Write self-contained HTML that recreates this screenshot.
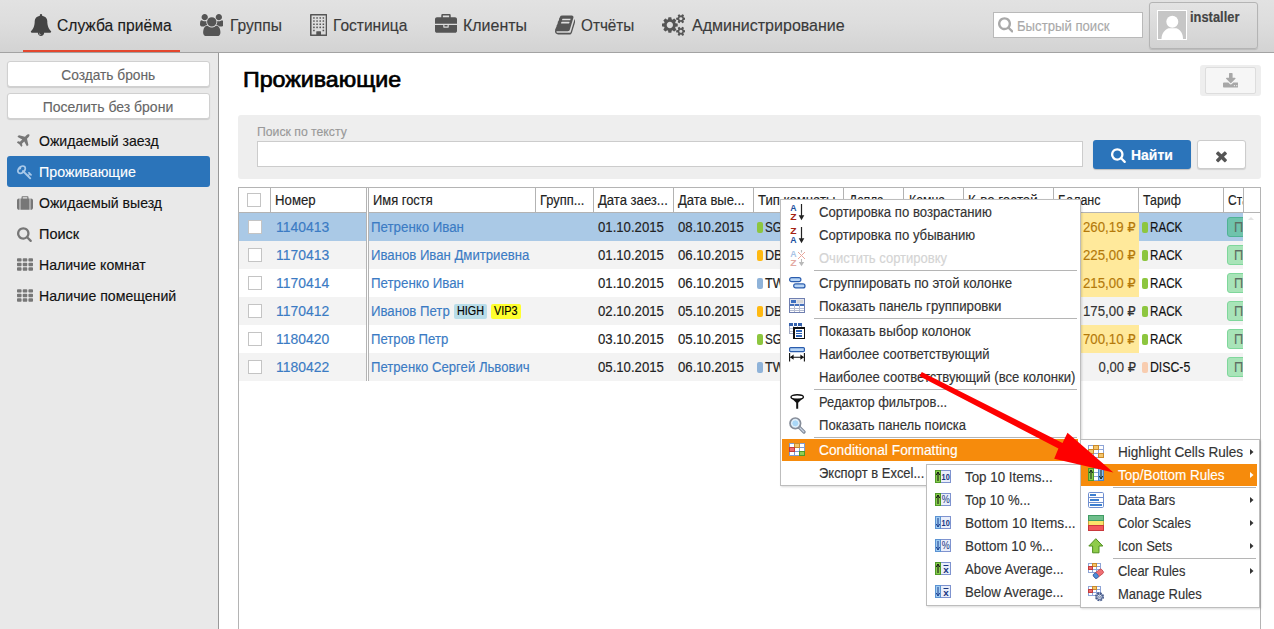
<!DOCTYPE html>
<html lang="ru"><head><meta charset="utf-8"><title>Проживающие</title>
<style>
*{box-sizing:border-box;margin:0;padding:0}
html,body{width:1274px;height:629px;overflow:hidden;background:#fff}
body{position:relative;font-family:"Liberation Sans", "DejaVu Sans", sans-serif;font-size:14px}
div,span.t,svg.i,svg.a{position:absolute}
nav,aside,main,section{position:absolute;left:0;top:0;width:0;height:0}
span.t{white-space:pre;line-height:20px;display:block;-webkit-text-stroke:0.15px}
.nav{background:linear-gradient(#e2e2e2,#dddddd 45%,#d3d3d3);border-bottom:1px solid #a3a3a3}
.side{background:#e9e9e9;border-right:1px solid #999}
.btn{background:#fff;border:1px solid #d0d0d0;border-radius:3px;box-shadow:0 1px 1px rgba(0,0,0,.12)}
.menu{background:#fff;border:1px solid #bdbdbd;box-shadow:1px 1px 2px rgba(0,0,0,.15)}
.sep{background:#b5b5b5;height:1px}
.hl{background:#f68b0c}
.cb{background:#fff;border:1px solid #c4c4c4}
.hc{border-right:1px solid #b3b3b3;border-bottom:1px solid #b3b3b3;background:#fff}
.dot{border-radius:2px}
.st{border:1px solid #7fd79b;background:#a8e4b8;border-radius:3px}

</style></head>
<body>
<nav>
<div class="nav" style="left:0px;top:0px;width:1274px;height:53px;"></div>
<div style="left:23px;top:50px;width:157px;height:2px;background:#e4472e"></div>
<svg class="i" style="left:29.8px;top:14px;" width="22.00" height="22" viewBox="0 -1536 1792 1792"><path fill="#444" transform="scale(1,-1)" d="M896 -144Q837 -144 794.5 -101.5Q752 -59 752 0Q752 16 736.0 16.0Q720 16 720 0Q720 -73 771.5 -124.5Q823 -176 896 -176Q912 -176 912.0 -160.0Q912 -144 896 -144ZM1728 128Q1728 76 1690.0 38.0Q1652 0 1600 0H1152Q1152 -106 1077.0 -181.0Q1002 -256 896.0 -256.0Q790 -256 715.0 -181.0Q640 -106 640 0H192Q140 0 102.0 38.0Q64 76 64 128Q114 170 155.0 216.0Q196 262 240.0 335.5Q284 409 314.5 494.0Q345 579 364.5 700.0Q384 821 384 960Q384 1112 501.0 1242.5Q618 1373 808 1401Q800 1420 800 1440Q800 1480 828.0 1508.0Q856 1536 896.0 1536.0Q936 1536 964.0 1508.0Q992 1480 992 1440Q992 1420 984 1401Q1174 1373 1291.0 1242.5Q1408 1112 1408 960Q1408 821 1427.5 700.0Q1447 579 1477.5 494.0Q1508 409 1552.0 335.5Q1596 262 1637.0 216.0Q1678 170 1728 128Z"/></svg>
<span class="t" style="left:57.30px;top:16.00px;font-size:17px;color:#1b1b1b;transform:scaleX(0.9186);transform-origin:0 0;">Служба приёма</span>
<svg class="i" style="left:199.7px;top:14px;" width="23.57" height="22" viewBox="0 -1536 1920 1792"><path fill="#555" transform="scale(1,-1)" d="M593 640Q431 635 328 512H194Q112 512 56.0 552.5Q0 593 0 671Q0 1024 124 1024Q130 1024 167.5 1003.0Q205 982 265.0 960.5Q325 939 384 939Q451 939 517 962Q512 925 512 896Q512 757 593 640ZM1664 3Q1664 -117 1591.0 -186.5Q1518 -256 1397 -256H523Q402 -256 329.0 -186.5Q256 -117 256 3Q256 56 259.5 106.5Q263 157 273.5 215.5Q284 274 300.0 324.0Q316 374 343.0 421.5Q370 469 405.0 502.5Q440 536 490.5 556.0Q541 576 602 576Q612 576 645.0 554.5Q678 533 718.0 506.5Q758 480 825.0 458.5Q892 437 960.0 437.0Q1028 437 1095.0 458.5Q1162 480 1202.0 506.5Q1242 533 1275.0 554.5Q1308 576 1318 576Q1379 576 1429.5 556.0Q1480 536 1515.0 502.5Q1550 469 1577.0 421.5Q1604 374 1620.0 324.0Q1636 274 1646.5 215.5Q1657 157 1660.5 106.5Q1664 56 1664 3ZM565.0 1461.0Q640 1386 640.0 1280.0Q640 1174 565.0 1099.0Q490 1024 384.0 1024.0Q278 1024 203.0 1099.0Q128 1174 128.0 1280.0Q128 1386 203.0 1461.0Q278 1536 384.0 1536.0Q490 1536 565.0 1461.0ZM1231.5 1167.5Q1344 1055 1344.0 896.0Q1344 737 1231.5 624.5Q1119 512 960.0 512.0Q801 512 688.5 624.5Q576 737 576.0 896.0Q576 1055 688.5 1167.5Q801 1280 960.0 1280.0Q1119 1280 1231.5 1167.5ZM1920 671Q1920 593 1864.0 552.5Q1808 512 1726 512H1592Q1489 635 1327 640Q1408 757 1408 896Q1408 925 1403 962Q1469 939 1536 939Q1595 939 1655.0 960.5Q1715 982 1752.5 1003.0Q1790 1024 1796 1024Q1920 1024 1920 671ZM1717.0 1461.0Q1792 1386 1792.0 1280.0Q1792 1174 1717.0 1099.0Q1642 1024 1536.0 1024.0Q1430 1024 1355.0 1099.0Q1280 1174 1280.0 1280.0Q1280 1386 1355.0 1461.0Q1430 1536 1536.0 1536.0Q1642 1536 1717.0 1461.0Z"/></svg>
<span class="t" style="left:230.40px;top:16.00px;font-size:17px;color:#3a3a3a;transform:scaleX(0.9175);transform-origin:0 0;">Группы</span>
<svg class="i" style="left:310px;top:14px;" width="17.29" height="22" viewBox="0 -1536 1408 1792"><path fill="#555" transform="scale(1,-1)" d="M384 224V160Q384 147 374.5 137.5Q365 128 352 128H288Q275 128 265.5 137.5Q256 147 256 160V224Q256 237 265.5 246.5Q275 256 288 256H352Q365 256 374.5 246.5Q384 237 384 224ZM384 480V416Q384 403 374.5 393.5Q365 384 352 384H288Q275 384 265.5 393.5Q256 403 256 416V480Q256 493 265.5 502.5Q275 512 288 512H352Q365 512 374.5 502.5Q384 493 384 480ZM640 480V416Q640 403 630.5 393.5Q621 384 608 384H544Q531 384 521.5 393.5Q512 403 512 416V480Q512 493 521.5 502.5Q531 512 544 512H608Q621 512 630.5 502.5Q640 493 640 480ZM384 736V672Q384 659 374.5 649.5Q365 640 352 640H288Q275 640 265.5 649.5Q256 659 256 672V736Q256 749 265.5 758.5Q275 768 288 768H352Q365 768 374.5 758.5Q384 749 384 736ZM1152 224V160Q1152 147 1142.5 137.5Q1133 128 1120 128H1056Q1043 128 1033.5 137.5Q1024 147 1024 160V224Q1024 237 1033.5 246.5Q1043 256 1056 256H1120Q1133 256 1142.5 246.5Q1152 237 1152 224ZM896 480V416Q896 403 886.5 393.5Q877 384 864 384H800Q787 384 777.5 393.5Q768 403 768 416V480Q768 493 777.5 502.5Q787 512 800 512H864Q877 512 886.5 502.5Q896 493 896 480ZM640 736V672Q640 659 630.5 649.5Q621 640 608 640H544Q531 640 521.5 649.5Q512 659 512 672V736Q512 749 521.5 758.5Q531 768 544 768H608Q621 768 630.5 758.5Q640 749 640 736ZM384 992V928Q384 915 374.5 905.5Q365 896 352 896H288Q275 896 265.5 905.5Q256 915 256 928V992Q256 1005 265.5 1014.5Q275 1024 288 1024H352Q365 1024 374.5 1014.5Q384 1005 384 992ZM1152 480V416Q1152 403 1142.5 393.5Q1133 384 1120 384H1056Q1043 384 1033.5 393.5Q1024 403 1024 416V480Q1024 493 1033.5 502.5Q1043 512 1056 512H1120Q1133 512 1142.5 502.5Q1152 493 1152 480ZM896 736V672Q896 659 886.5 649.5Q877 640 864 640H800Q787 640 777.5 649.5Q768 659 768 672V736Q768 749 777.5 758.5Q787 768 800 768H864Q877 768 886.5 758.5Q896 749 896 736ZM640 992V928Q640 915 630.5 905.5Q621 896 608 896H544Q531 896 521.5 905.5Q512 915 512 928V992Q512 1005 521.5 1014.5Q531 1024 544 1024H608Q621 1024 630.5 1014.5Q640 1005 640 992ZM384 1248V1184Q384 1171 374.5 1161.5Q365 1152 352 1152H288Q275 1152 265.5 1161.5Q256 1171 256 1184V1248Q256 1261 265.5 1270.5Q275 1280 288 1280H352Q365 1280 374.5 1270.5Q384 1261 384 1248ZM1152 736V672Q1152 659 1142.5 649.5Q1133 640 1120 640H1056Q1043 640 1033.5 649.5Q1024 659 1024 672V736Q1024 749 1033.5 758.5Q1043 768 1056 768H1120Q1133 768 1142.5 758.5Q1152 749 1152 736ZM896 992V928Q896 915 886.5 905.5Q877 896 864 896H800Q787 896 777.5 905.5Q768 915 768 928V992Q768 1005 777.5 1014.5Q787 1024 800 1024H864Q877 1024 886.5 1014.5Q896 1005 896 992ZM640 1248V1184Q640 1171 630.5 1161.5Q621 1152 608 1152H544Q531 1152 521.5 1161.5Q512 1171 512 1184V1248Q512 1261 521.5 1270.5Q531 1280 544 1280H608Q621 1280 630.5 1270.5Q640 1261 640 1248ZM1152 992V928Q1152 915 1142.5 905.5Q1133 896 1120 896H1056Q1043 896 1033.5 905.5Q1024 915 1024 928V992Q1024 1005 1033.5 1014.5Q1043 1024 1056 1024H1120Q1133 1024 1142.5 1014.5Q1152 1005 1152 992ZM896 1248V1184Q896 1171 886.5 1161.5Q877 1152 864 1152H800Q787 1152 777.5 1161.5Q768 1171 768 1184V1248Q768 1261 777.5 1270.5Q787 1280 800 1280H864Q877 1280 886.5 1270.5Q896 1261 896 1248ZM1152 1248V1184Q1152 1171 1142.5 1161.5Q1133 1152 1120 1152H1056Q1043 1152 1033.5 1161.5Q1024 1171 1024 1184V1248Q1024 1261 1033.5 1270.5Q1043 1280 1056 1280H1120Q1133 1280 1142.5 1270.5Q1152 1261 1152 1248ZM896 -128H1280V1408H128V-128H512V96Q512 109 521.5 118.5Q531 128 544 128H864Q877 128 886.5 118.5Q896 109 896 96ZM1408 1472V-192Q1408 -218 1389.0 -237.0Q1370 -256 1344 -256H64Q38 -256 19.0 -237.0Q0 -218 0 -192V1472Q0 1498 19.0 1517.0Q38 1536 64 1536H1344Q1370 1536 1389.0 1517.0Q1408 1498 1408 1472Z"/></svg>
<span class="t" style="left:333.30px;top:16.00px;font-size:17px;color:#3a3a3a;transform:scaleX(0.9144);transform-origin:0 0;">Гостиница</span>
<svg class="i" style="left:435px;top:14px;" width="22.00" height="22" viewBox="0 -1536 1792 1792"><path fill="#555" transform="scale(1,-1)" d="M640 1280H1152V1408H640ZM1792 640V160Q1792 94 1745.0 47.0Q1698 0 1632 0H160Q94 0 47.0 47.0Q0 94 0 160V640H672V480Q672 454 691.0 435.0Q710 416 736 416H1056Q1082 416 1101.0 435.0Q1120 454 1120 480V640ZM1024 640V512H768V640ZM1792 1120V736H0V1120Q0 1186 47.0 1233.0Q94 1280 160 1280H512V1440Q512 1480 540.0 1508.0Q568 1536 608 1536H1184Q1224 1536 1252.0 1508.0Q1280 1480 1280 1440V1280H1632Q1698 1280 1745.0 1233.0Q1792 1186 1792 1120Z"/></svg>
<span class="t" style="left:463.40px;top:16.00px;font-size:17px;color:#3a3a3a;transform:scaleX(0.9390);transform-origin:0 0;">Клиенты</span>
<svg class="i" style="left:555px;top:14px;" width="20.43" height="22" viewBox="0 -1536 1664 1792"><path fill="#555" transform="scale(1,-1)" d="M1639 1058Q1679 1001 1657 929L1382 23Q1363 -41 1305.5 -84.5Q1248 -128 1183 -128H260Q183 -128 111.5 -74.5Q40 -21 12 57Q-12 124 10 184Q10 188 13.0 211.0Q16 234 17 248Q18 256 14.0 269.5Q10 283 11 289Q13 300 19.0 310.0Q25 320 35.5 333.5Q46 347 52 357Q75 395 97.0 448.5Q119 502 127 540Q130 550 127.5 570.0Q125 590 127 598Q130 609 144.0 626.0Q158 643 161 649Q182 685 203.0 741.0Q224 797 228 831Q229 840 225.5 863.0Q222 886 226 891Q230 904 248.0 921.5Q266 939 270 944Q289 970 312.5 1028.5Q336 1087 340 1125Q341 1133 337.0 1150.5Q333 1168 335 1177Q337 1185 344.0 1195.0Q351 1205 362.0 1218.0Q373 1231 379 1239Q387 1251 395.5 1269.5Q404 1288 410.5 1304.5Q417 1321 426.5 1340.5Q436 1360 446.0 1372.5Q456 1385 472.5 1396.0Q489 1407 508.5 1407.5Q528 1408 556 1402L555 1399Q593 1408 606 1408H1367Q1441 1408 1481.0 1352.0Q1521 1296 1499 1222L1225 316Q1189 197 1153.5 162.5Q1118 128 1025 128H156Q129 128 118 113Q107 97 117 70Q141 0 261 0H1184Q1213 0 1240.0 15.5Q1267 31 1275 57L1575 1044Q1582 1066 1580 1101Q1618 1086 1639 1058ZM575 1056Q571 1043 577.0 1033.5Q583 1024 597 1024H1205Q1218 1024 1230.5 1033.5Q1243 1043 1247 1056L1268 1120Q1272 1133 1266.0 1142.5Q1260 1152 1246 1152H638Q625 1152 612.5 1142.5Q600 1133 596 1120ZM492 800Q488 787 494.0 777.5Q500 768 514 768H1122Q1135 768 1147.5 777.5Q1160 787 1164 800L1185 864Q1189 877 1183.0 886.5Q1177 896 1163 896H555Q542 896 529.5 886.5Q517 877 513 864Z"/></svg>
<span class="t" style="left:581.30px;top:16.00px;font-size:17px;color:#3a3a3a;transform:scaleX(0.8994);transform-origin:0 0;">Отчёты</span>
<svg class="i" style="left:661.7px;top:14px;" width="23.57" height="22" viewBox="0 -1536 1920 1792"><path fill="#555" transform="scale(1,-1)" d="M821.0 459.0Q896 534 896.0 640.0Q896 746 821.0 821.0Q746 896 640.0 896.0Q534 896 459.0 821.0Q384 746 384.0 640.0Q384 534 459.0 459.0Q534 384 640.0 384.0Q746 384 821.0 459.0ZM1664 128Q1664 180 1626.0 218.0Q1588 256 1536.0 256.0Q1484 256 1446.0 218.0Q1408 180 1408 128Q1408 75 1445.5 37.5Q1483 0 1536.0 0.0Q1589 0 1626.5 37.5Q1664 75 1664 128ZM1664 1152Q1664 1204 1626.0 1242.0Q1588 1280 1536.0 1280.0Q1484 1280 1446.0 1242.0Q1408 1204 1408 1152Q1408 1099 1445.5 1061.5Q1483 1024 1536.0 1024.0Q1589 1024 1626.5 1061.5Q1664 1099 1664 1152ZM1280 731V546Q1280 536 1273.0 526.5Q1266 517 1257 516L1102 492Q1091 457 1070 416Q1104 368 1160 301Q1167 290 1167 281Q1167 269 1160 262Q1137 232 1077.5 172.5Q1018 113 999 113Q988 113 978 120L863 210Q826 191 786 179Q775 71 763 24Q756 0 733 0H547Q536 0 527.0 7.5Q518 15 517 25L494 178Q460 188 419 209L301 120Q294 113 281 113Q270 113 260 121Q116 254 116 281Q116 290 123 300Q133 314 164.0 353.0Q195 392 211 414Q188 458 176 496L24 520Q14 521 7.0 529.5Q0 538 0 549V734Q0 744 7.0 753.5Q14 763 23 764L178 788Q189 823 210 864Q176 912 120 979Q113 990 113 999Q113 1011 120 1019Q142 1049 202.0 1108.0Q262 1167 281 1167Q292 1167 302 1160L417 1070Q451 1088 494 1102Q505 1210 517 1256Q524 1280 547 1280H733Q744 1280 753.0 1272.5Q762 1265 763 1255L786 1102Q820 1092 861 1071L979 1160Q987 1167 999 1167Q1010 1167 1020 1159Q1164 1026 1164 999Q1164 991 1157 980Q1145 964 1115.0 926.0Q1085 888 1070 866Q1093 818 1104 784L1256 761Q1266 759 1273.0 750.5Q1280 742 1280 731ZM1920 198V58Q1920 42 1771 27Q1759 0 1741 -25Q1792 -138 1792 -163Q1792 -167 1788 -170Q1666 -241 1664 -241Q1656 -241 1618.0 -194.0Q1580 -147 1566 -126Q1546 -128 1536.0 -128.0Q1526 -128 1506 -126Q1492 -147 1454.0 -194.0Q1416 -241 1408 -241Q1406 -241 1284 -170Q1280 -167 1280 -163Q1280 -138 1331 -25Q1313 0 1301 27Q1152 42 1152 58V198Q1152 214 1301 229Q1314 258 1331 281Q1280 394 1280 419Q1280 423 1284 426Q1288 428 1319.0 446.0Q1350 464 1378.0 480.0Q1406 496 1408 496Q1416 496 1454.0 449.5Q1492 403 1506 382Q1526 384 1536.0 384.0Q1546 384 1566 382Q1617 453 1658 494L1664 496Q1668 496 1788 426Q1792 423 1792 419Q1792 394 1741 281Q1758 258 1771 229Q1920 214 1920 198ZM1920 1222V1082Q1920 1066 1771 1051Q1759 1024 1741 999Q1792 886 1792 861Q1792 857 1788 854Q1666 783 1664 783Q1656 783 1618.0 830.0Q1580 877 1566 898Q1546 896 1536.0 896.0Q1526 896 1506 898Q1492 877 1454.0 830.0Q1416 783 1408 783Q1406 783 1284 854Q1280 857 1280 861Q1280 886 1331 999Q1313 1024 1301 1051Q1152 1066 1152 1082V1222Q1152 1238 1301 1253Q1314 1282 1331 1305Q1280 1418 1280 1443Q1280 1447 1284 1450Q1288 1452 1319.0 1470.0Q1350 1488 1378.0 1504.0Q1406 1520 1408 1520Q1416 1520 1454.0 1473.5Q1492 1427 1506 1406Q1526 1408 1536.0 1408.0Q1546 1408 1566 1406Q1617 1477 1658 1518L1664 1520Q1668 1520 1788 1450Q1792 1447 1792 1443Q1792 1418 1741 1305Q1758 1282 1771 1253Q1920 1238 1920 1222Z"/></svg>
<span class="t" style="left:692.00px;top:16.00px;font-size:17px;color:#3a3a3a;transform:scaleX(0.9421);transform-origin:0 0;">Администрирование</span>
<div style="left:993px;top:12px;width:150px;height:26px;background:#fff;border:1px solid #b9b9b9"></div>
<svg class="i" style="left:997.7px;top:16.2px;" width="15.41" height="16.6" viewBox="0 -1536 1664 1792"><path fill="#a9a9a9" transform="scale(1,-1)" d="M1020.5 387.5Q1152 519 1152.0 704.0Q1152 889 1020.5 1020.5Q889 1152 704.0 1152.0Q519 1152 387.5 1020.5Q256 889 256.0 704.0Q256 519 387.5 387.5Q519 256 704.0 256.0Q889 256 1020.5 387.5ZM1664 -128Q1664 -180 1626.0 -218.0Q1588 -256 1536 -256Q1482 -256 1446 -218L1103 124Q924 0 704 0Q561 0 430.5 55.5Q300 111 205.5 205.5Q111 300 55.5 430.5Q0 561 0.0 704.0Q0 847 55.5 977.5Q111 1108 205.5 1202.5Q300 1297 430.5 1352.5Q561 1408 704.0 1408.0Q847 1408 977.5 1352.5Q1108 1297 1202.5 1202.5Q1297 1108 1352.5 977.5Q1408 847 1408 704Q1408 484 1284 305L1627 -38Q1664 -75 1664 -128Z"/></svg>
<span class="t" style="left:1017.30px;top:15.90px;font-size:14px;color:#a9a9a9;transform:scaleX(0.9382);transform-origin:0 0;">Быстрый поиск</span>
<div style="left:1149px;top:2px;width:109px;height:47px;background:linear-gradient(#e3e3e3,#d2d2d2);border:1px solid #b4b4b4;border-radius:3px;box-shadow:0 1px 1px rgba(0,0,0,.12)"></div>
<svg class="i" style="left:1157px;top:10px" width="30" height="30" viewBox="0 0 30 30"><rect width="30" height="30" fill="#fff"/><rect x="1" y="1" width="28" height="28" fill="#c6c6c6"/><circle cx="15.3" cy="11.8" r="6" fill="#fff"/><path d="M4.5 29C4.5 24 7 20 11.500 18.200H19.500C24 20 26 24 26 29z" fill="#fff"/></svg>
<span class="t" style="left:1190.20px;top:7.30px;font-size:14px;color:#444;font-weight:700;transform:scaleX(0.9200);transform-origin:0 0;">installer</span>
</nav>
<aside>
<div class="side" style="left:0px;top:53px;width:219px;height:576px;"></div>
<div class="btn" style="left:7px;top:61px;width:203px;height:26px;"></div>
<span class="t" style="left:56.93px;top:65.00px;font-size:15px;color:#666;transform:scaleX(0.9159);transform-origin:50% 0;">Создать бронь</span>
<div class="btn" style="left:7px;top:93px;width:203px;height:26px;"></div>
<span class="t" style="left:38.36px;top:97.00px;font-size:15px;color:#666;transform:scaleX(0.9333);transform-origin:50% 0;">Поселить без брони</span>
<svg class="i" style="left:17px;top:133.2px;" width="12.57" height="16" viewBox="0 -1536 1408 1792"><path fill="#777" transform="scale(1,-1)" d="M1376 1376Q1420 1324 1388.0 1228.0Q1356 1132 1280 1056L1119 895L1279 199Q1284 180 1267 166L1139 70Q1132 64 1120 64Q1116 64 1113 65Q1098 68 1092 81L813 589L554 330L607 136Q612 119 599 105L503 9Q494 0 480 0H478Q463 2 454 13L265 265L13 454Q2 461 0 477Q-1 490 9 502L105 599Q114 608 128 608Q134 608 136 607L330 554L589 813L81 1092Q67 1100 64 1116Q62 1132 73 1143L201 1271Q215 1284 231 1279L896 1120L1056 1280Q1132 1356 1228.0 1388.0Q1324 1420 1376 1376Z"/></svg>
<span class="t" style="left:39.40px;top:131.30px;font-size:15px;color:#111;transform:scaleX(0.9372);transform-origin:0 0;">Ожидаемый заезд</span>
<div style="left:7px;top:156px;width:203px;height:31px;background:#2b74ba;border-radius:3px"></div>
<svg class="i" style="left:17px;top:164.2px;" width="16.00" height="16" viewBox="0 -1536 1792 1792"><path fill="#a9c9e9" transform="scale(1,-1)" d="M448 1024Q448 982 467 941Q426 960 384 960Q304 960 248.0 904.0Q192 848 192.0 768.0Q192 688 248.0 632.0Q304 576 384.0 576.0Q464 576 520.0 632.0Q576 688 576 768Q576 810 557 851Q598 832 640 832Q720 832 776.0 888.0Q832 944 832.0 1024.0Q832 1104 776.0 1160.0Q720 1216 640.0 1216.0Q560 1216 504.0 1160.0Q448 1104 448 1024ZM1683 320Q1683 303 1634.0 254.0Q1585 205 1568 205Q1559 205 1539.5 221.0Q1520 237 1503.0 254.0Q1486 271 1464.5 294.0Q1443 317 1440 320L1344 224L1564 4Q1592 -24 1592 -64Q1592 -106 1553.0 -145.0Q1514 -184 1472 -184Q1432 -184 1404 -156L733 515Q557 384 368 384Q205 384 102.5 486.5Q0 589 0 752Q0 912 95.0 1065.0Q190 1218 343.0 1313.0Q496 1408 656 1408Q819 1408 921.5 1305.5Q1024 1203 1024 1040Q1024 851 893 675L1248 320L1344 416Q1341 419 1318.0 440.5Q1295 462 1278.0 479.0Q1261 496 1245.0 515.5Q1229 535 1229 544Q1229 561 1278.0 610.0Q1327 659 1344 659Q1357 659 1367 649Q1373 643 1413.0 604.5Q1453 566 1495.0 525.0Q1537 484 1581.5 439.0Q1626 394 1654.5 361.0Q1683 328 1683 320Z"/></svg>
<span class="t" style="left:39.40px;top:162.30px;font-size:15px;color:#fff;transform:scaleX(0.9479);transform-origin:0 0;">Проживающие</span>
<svg class="i" style="left:17px;top:195.2px;" width="16.00" height="16" viewBox="0 -1536 1792 1792"><path fill="#777" transform="scale(1,-1)" d="M640 1152H1152V1280H640ZM288 1152V-128H224Q132 -128 66.0 -62.0Q0 4 0 96V928Q0 1020 66.0 1086.0Q132 1152 224 1152ZM1408 1152V-128H384V1152H512V1312Q512 1352 540.0 1380.0Q568 1408 608 1408H1184Q1224 1408 1252.0 1380.0Q1280 1352 1280 1312V1152ZM1792 928V96Q1792 4 1726.0 -62.0Q1660 -128 1568 -128H1504V1152H1568Q1660 1152 1726.0 1086.0Q1792 1020 1792 928Z"/></svg>
<span class="t" style="left:39.40px;top:193.30px;font-size:15px;color:#111;transform:scaleX(0.9375);transform-origin:0 0;">Ожидаемый выезд</span>
<svg class="i" style="left:17px;top:226.2px;" width="14.86" height="16" viewBox="0 -1536 1664 1792"><path fill="#777" transform="scale(1,-1)" d="M1020.5 387.5Q1152 519 1152.0 704.0Q1152 889 1020.5 1020.5Q889 1152 704.0 1152.0Q519 1152 387.5 1020.5Q256 889 256.0 704.0Q256 519 387.5 387.5Q519 256 704.0 256.0Q889 256 1020.5 387.5ZM1664 -128Q1664 -180 1626.0 -218.0Q1588 -256 1536 -256Q1482 -256 1446 -218L1103 124Q924 0 704 0Q561 0 430.5 55.5Q300 111 205.5 205.5Q111 300 55.5 430.5Q0 561 0.0 704.0Q0 847 55.5 977.5Q111 1108 205.5 1202.5Q300 1297 430.5 1352.5Q561 1408 704.0 1408.0Q847 1408 977.5 1352.5Q1108 1297 1202.5 1202.5Q1297 1108 1352.5 977.5Q1408 847 1408 704Q1408 484 1284 305L1627 -38Q1664 -75 1664 -128Z"/></svg>
<span class="t" style="left:39.40px;top:224.30px;font-size:15px;color:#111;transform:scaleX(0.9635);transform-origin:0 0;">Поиск</span>
<svg class="i" style="left:17px;top:257.2px;" width="16.00" height="16" viewBox="0 -1536 1792 1792"><path fill="#777" transform="scale(1,-1)" d="M512 288V96Q512 56 484.0 28.0Q456 0 416 0H96Q56 0 28.0 28.0Q0 56 0 96V288Q0 328 28.0 356.0Q56 384 96 384H416Q456 384 484.0 356.0Q512 328 512 288ZM512 800V608Q512 568 484.0 540.0Q456 512 416 512H96Q56 512 28.0 540.0Q0 568 0 608V800Q0 840 28.0 868.0Q56 896 96 896H416Q456 896 484.0 868.0Q512 840 512 800ZM1152 288V96Q1152 56 1124.0 28.0Q1096 0 1056 0H736Q696 0 668.0 28.0Q640 56 640 96V288Q640 328 668.0 356.0Q696 384 736 384H1056Q1096 384 1124.0 356.0Q1152 328 1152 288ZM512 1312V1120Q512 1080 484.0 1052.0Q456 1024 416 1024H96Q56 1024 28.0 1052.0Q0 1080 0 1120V1312Q0 1352 28.0 1380.0Q56 1408 96 1408H416Q456 1408 484.0 1380.0Q512 1352 512 1312ZM1152 800V608Q1152 568 1124.0 540.0Q1096 512 1056 512H736Q696 512 668.0 540.0Q640 568 640 608V800Q640 840 668.0 868.0Q696 896 736 896H1056Q1096 896 1124.0 868.0Q1152 840 1152 800ZM1792 288V96Q1792 56 1764.0 28.0Q1736 0 1696 0H1376Q1336 0 1308.0 28.0Q1280 56 1280 96V288Q1280 328 1308.0 356.0Q1336 384 1376 384H1696Q1736 384 1764.0 356.0Q1792 328 1792 288ZM1152 1312V1120Q1152 1080 1124.0 1052.0Q1096 1024 1056 1024H736Q696 1024 668.0 1052.0Q640 1080 640 1120V1312Q640 1352 668.0 1380.0Q696 1408 736 1408H1056Q1096 1408 1124.0 1380.0Q1152 1352 1152 1312ZM1792 800V608Q1792 568 1764.0 540.0Q1736 512 1696 512H1376Q1336 512 1308.0 540.0Q1280 568 1280 608V800Q1280 840 1308.0 868.0Q1336 896 1376 896H1696Q1736 896 1764.0 868.0Q1792 840 1792 800ZM1792 1312V1120Q1792 1080 1764.0 1052.0Q1736 1024 1696 1024H1376Q1336 1024 1308.0 1052.0Q1280 1080 1280 1120V1312Q1280 1352 1308.0 1380.0Q1336 1408 1376 1408H1696Q1736 1408 1764.0 1380.0Q1792 1352 1792 1312Z"/></svg>
<span class="t" style="left:39.40px;top:255.30px;font-size:15px;color:#111;transform:scaleX(0.9392);transform-origin:0 0;">Наличие комнат</span>
<svg class="i" style="left:17px;top:288.2px;" width="16.00" height="16" viewBox="0 -1536 1792 1792"><path fill="#777" transform="scale(1,-1)" d="M512 288V96Q512 56 484.0 28.0Q456 0 416 0H96Q56 0 28.0 28.0Q0 56 0 96V288Q0 328 28.0 356.0Q56 384 96 384H416Q456 384 484.0 356.0Q512 328 512 288ZM512 800V608Q512 568 484.0 540.0Q456 512 416 512H96Q56 512 28.0 540.0Q0 568 0 608V800Q0 840 28.0 868.0Q56 896 96 896H416Q456 896 484.0 868.0Q512 840 512 800ZM1152 288V96Q1152 56 1124.0 28.0Q1096 0 1056 0H736Q696 0 668.0 28.0Q640 56 640 96V288Q640 328 668.0 356.0Q696 384 736 384H1056Q1096 384 1124.0 356.0Q1152 328 1152 288ZM512 1312V1120Q512 1080 484.0 1052.0Q456 1024 416 1024H96Q56 1024 28.0 1052.0Q0 1080 0 1120V1312Q0 1352 28.0 1380.0Q56 1408 96 1408H416Q456 1408 484.0 1380.0Q512 1352 512 1312ZM1152 800V608Q1152 568 1124.0 540.0Q1096 512 1056 512H736Q696 512 668.0 540.0Q640 568 640 608V800Q640 840 668.0 868.0Q696 896 736 896H1056Q1096 896 1124.0 868.0Q1152 840 1152 800ZM1792 288V96Q1792 56 1764.0 28.0Q1736 0 1696 0H1376Q1336 0 1308.0 28.0Q1280 56 1280 96V288Q1280 328 1308.0 356.0Q1336 384 1376 384H1696Q1736 384 1764.0 356.0Q1792 328 1792 288ZM1152 1312V1120Q1152 1080 1124.0 1052.0Q1096 1024 1056 1024H736Q696 1024 668.0 1052.0Q640 1080 640 1120V1312Q640 1352 668.0 1380.0Q696 1408 736 1408H1056Q1096 1408 1124.0 1380.0Q1152 1352 1152 1312ZM1792 800V608Q1792 568 1764.0 540.0Q1736 512 1696 512H1376Q1336 512 1308.0 540.0Q1280 568 1280 608V800Q1280 840 1308.0 868.0Q1336 896 1376 896H1696Q1736 896 1764.0 868.0Q1792 840 1792 800ZM1792 1312V1120Q1792 1080 1764.0 1052.0Q1736 1024 1696 1024H1376Q1336 1024 1308.0 1052.0Q1280 1080 1280 1120V1312Q1280 1352 1308.0 1380.0Q1336 1408 1376 1408H1696Q1736 1408 1764.0 1380.0Q1792 1352 1792 1312Z"/></svg>
<span class="t" style="left:39.40px;top:286.30px;font-size:15px;color:#111;transform:scaleX(0.9417);transform-origin:0 0;">Наличие помещений</span>
</aside>
<main>
<span class="t" style="left:242.60px;top:70.20px;font-size:22.5px;color:#000;transform:scaleX(1.0323);transform-origin:0 0;-webkit-text-stroke:0.7px #000;">Проживающие</span>
<div style="left:1200px;top:65px;width:61px;height:31px;background:#eee;border-radius:3px"></div>
<div style="left:1205px;top:67px;width:51px;height:27px;background:#f6f6f6;border:1px solid #ddd;border-radius:2px"></div>
<svg class="i" style="left:1222.7px;top:72.8px;" width="15.60" height="16.8" viewBox="0 -1536 1664 1792"><path fill="#a8a8a8" transform="scale(1,-1)" d="M1261.0 147.0Q1280 166 1280.0 192.0Q1280 218 1261.0 237.0Q1242 256 1216.0 256.0Q1190 256 1171.0 237.0Q1152 218 1152.0 192.0Q1152 166 1171.0 147.0Q1190 128 1216.0 128.0Q1242 128 1261.0 147.0ZM1517.0 147.0Q1536 166 1536.0 192.0Q1536 218 1517.0 237.0Q1498 256 1472.0 256.0Q1446 256 1427.0 237.0Q1408 218 1408.0 192.0Q1408 166 1427.0 147.0Q1446 128 1472.0 128.0Q1498 128 1517.0 147.0ZM1664 416V96Q1664 56 1636.0 28.0Q1608 0 1568 0H96Q56 0 28.0 28.0Q0 56 0 96V416Q0 456 28.0 484.0Q56 512 96 512H561L696 376Q754 320 832.0 320.0Q910 320 968 376L1104 512H1568Q1608 512 1636.0 484.0Q1664 456 1664 416ZM1339 985Q1356 944 1325 915L877 467Q859 448 832.0 448.0Q805 448 787 467L339 915Q308 944 325 985Q342 1024 384 1024H640V1472Q640 1498 659.0 1517.0Q678 1536 704 1536H960Q986 1536 1005.0 1517.0Q1024 1498 1024 1472V1024H1280Q1322 1024 1339 985Z"/></svg>
<div style="left:238px;top:115px;width:1023px;height:64px;background:#eee;border-radius:3px"></div>
<span class="t" style="left:257.00px;top:122.00px;font-size:13px;color:#999;transform:scaleX(0.9404);transform-origin:0 0;">Поиск по тексту</span>
<div style="left:257px;top:141px;width:826px;height:26px;background:#fff;border:1px solid #ccc"></div>
<div style="left:1093px;top:140px;width:98px;height:29px;background:#2b74ba;border-radius:3px;box-shadow:0 1px 1px rgba(0,0,0,.2)"></div>
<svg class="i" style="left:1111px;top:147.2px;" width="14.86" height="16" viewBox="0 -1536 1664 1792"><path fill="#fff" transform="scale(1,-1)" d="M1020.5 387.5Q1152 519 1152.0 704.0Q1152 889 1020.5 1020.5Q889 1152 704.0 1152.0Q519 1152 387.5 1020.5Q256 889 256.0 704.0Q256 519 387.5 387.5Q519 256 704.0 256.0Q889 256 1020.5 387.5ZM1664 -128Q1664 -180 1626.0 -218.0Q1588 -256 1536 -256Q1482 -256 1446 -218L1103 124Q924 0 704 0Q561 0 430.5 55.5Q300 111 205.5 205.5Q111 300 55.5 430.5Q0 561 0.0 704.0Q0 847 55.5 977.5Q111 1108 205.5 1202.5Q300 1297 430.5 1352.5Q561 1408 704.0 1408.0Q847 1408 977.5 1352.5Q1108 1297 1202.5 1202.5Q1297 1108 1352.5 977.5Q1408 847 1408 704Q1408 484 1284 305L1627 -38Q1664 -75 1664 -128Z"/></svg>
<span class="t" style="left:1130.60px;top:145.00px;font-size:15px;color:#fff;font-weight:700;transform:scaleX(0.9295);transform-origin:0 0;">Найти</span>
<div class="btn" style="left:1197px;top:140px;width:49px;height:29px;border-color:#ccc"></div>
<svg class="i" style="left:1214.7px;top:147.5px;" width="12.96" height="16.5" viewBox="0 -1536 1408 1792"><path fill="#555" transform="scale(1,-1)" d="M1270 146 1134 10Q1106 -18 1066.0 -18.0Q1026 -18 998 10L704 304L410 10Q382 -18 342.0 -18.0Q302 -18 274 10L138 146Q110 174 110.0 214.0Q110 254 138 282L432 576L138 870Q110 898 110.0 938.0Q110 978 138 1006L274 1142Q302 1170 342.0 1170.0Q382 1170 410 1142L704 848L998 1142Q1026 1170 1066.0 1170.0Q1106 1170 1134 1142L1270 1006Q1298 978 1298.0 938.0Q1298 898 1270 870L976 576L1270 282Q1298 254 1298.0 214.0Q1298 174 1270 146Z"/></svg>
<section class="grid">
<div style="left:238px;top:187px;width:1023px;height:442px;border:1px solid #b4b4b4;border-bottom:0"></div>
<div class="hc" style="left:239px;top:188px;width:32px;height:25px;"></div>
<div class="hc" style="left:271px;top:188px;width:96px;height:25px;"></div>
<div class="hc" style="left:367px;top:188px;width:169px;height:25px;"></div>
<div class="hc" style="left:536px;top:188px;width:58px;height:25px;"></div>
<div class="hc" style="left:594px;top:188px;width:80px;height:25px;"></div>
<div class="hc" style="left:674px;top:188px;width:80px;height:25px;"></div>
<div class="hc" style="left:754px;top:188px;width:90px;height:25px;"></div>
<div class="hc" style="left:844px;top:188px;width:60px;height:25px;"></div>
<div class="hc" style="left:904px;top:188px;width:60px;height:25px;"></div>
<div class="hc" style="left:964px;top:188px;width:90px;height:25px;"></div>
<div class="hc" style="left:1054px;top:188px;width:85px;height:25px;"></div>
<div class="hc" style="left:1139px;top:188px;width:85px;height:25px;"></div>
<div class="hc" style="left:1224px;top:188px;width:20px;height:25px;"></div>
<div style="left:1244px;top:188px;width:16px;height:25px;border-bottom:1px solid #b4b4b4;background:#fff"></div>
<div class="cb" style="left:247px;top:193px;width:14px;height:14px;"></div>
<span class="t" style="left:275.20px;top:190.40px;font-size:14px;color:#222;transform:scaleX(0.9431);transform-origin:0 0;">Номер</span>
<span class="t" style="left:373.00px;top:190.40px;font-size:14px;color:#222;transform:scaleX(0.9223);transform-origin:0 0;">Имя гостя</span>
<span class="t" style="left:540.00px;top:190.40px;font-size:14px;color:#222;transform:scaleX(0.9194);transform-origin:0 0;">Групп...</span>
<span class="t" style="left:598.00px;top:190.40px;font-size:14px;color:#222;transform:scaleX(0.9345);transform-origin:0 0;">Дата заез...</span>
<span class="t" style="left:678.00px;top:190.40px;font-size:14px;color:#222;transform:scaleX(0.9285);transform-origin:0 0;">Дата вые...</span>
<span class="t" style="left:758.00px;top:190.40px;font-size:14px;color:#222;transform:scaleX(0.9382);transform-origin:0 0;">Тип комнаты</span>
<span class="t" style="left:849.00px;top:190.40px;font-size:14px;color:#222;transform:scaleX(0.8454);transform-origin:0 0;">Допла...</span>
<span class="t" style="left:909.00px;top:190.40px;font-size:14px;color:#222;transform:scaleX(0.8813);transform-origin:0 0;">Комна...</span>
<span class="t" style="left:967.60px;top:190.40px;font-size:14px;color:#222;transform:scaleX(0.9522);transform-origin:0 0;">К-во гостей</span>
<span class="t" style="left:1057.80px;top:190.40px;font-size:14px;color:#222;transform:scaleX(0.8918);transform-origin:0 0;">Баланс</span>
<span class="t" style="left:1143.30px;top:190.40px;font-size:14px;color:#222;transform:scaleX(0.8851);transform-origin:0 0;">Тариф</span>
<span class="t" style="left:1228.40px;top:190.40px;font-size:14px;color:#222;width:17.02px;overflow:hidden;transform:scaleX(0.8577);transform-origin:0 0;">Статус</span>
<div style="left:1243px;top:188px;width:17px;height:24px;background:#fff;border-left:1px solid #b4b4b4"></div>
<div style="left:239px;top:213px;width:1004px;height:28px;background:#aac9e6"></div>
<div class="cb" style="left:248px;top:220px;width:14px;height:14px;"></div>
<span class="t" style="left:276.30px;top:217.00px;font-size:14px;color:#3b7bc4;transform:scaleX(0.9950);transform-origin:0 0;">1140413</span>
<span class="t" style="left:370.60px;top:217.00px;font-size:14px;color:#3b7bc4;transform:scaleX(0.9494);transform-origin:0 0;">Петренко Иван</span>
<span class="t" style="left:597.80px;top:217.00px;font-size:14px;color:#222;transform:scaleX(0.9404);transform-origin:0 0;">01.10.2015</span>
<span class="t" style="left:677.80px;top:217.00px;font-size:14px;color:#222;transform:scaleX(0.9404);transform-origin:0 0;">08.10.2015</span>
<div class="dot" style="left:757px;top:222px;width:6px;height:11px;background:#8dc63f"></div>
<span class="t" style="left:765.00px;top:217.00px;font-size:14px;color:#222;transform:scaleX(0.8299);transform-origin:0 0;">SGL</span>
<div style="left:1054px;top:213px;width:85px;height:28px;background:#ffe99b"></div>
<span class="t" style="left:1080.28px;top:217.00px;font-size:14px;color:#b4790a;transform:scaleX(0.9469);transform-origin:100% 0;">260,19 ₽</span>
<div class="dot" style="left:1142px;top:222px;width:5.5px;height:11px;background:#8dc63f"></div>
<span class="t" style="left:1149.60px;top:217.00px;font-size:14px;color:#111;transform:scaleX(0.8313);transform-origin:0 0;">RACK</span>
<div class="st" style="left:1226.5px;top:217px;width:30px;height:20px;background:#6fc3ac;border-color:#4fb394"></div>
<span class="t" style="left:1233.60px;top:217.00px;font-size:14px;color:#5d6d63;transform:scaleX(0.9177);transform-origin:0 0;">П</span>
<div style="left:239px;top:241px;width:1004px;height:28px;background:#f3f3f3"></div>
<div class="cb" style="left:248px;top:248px;width:14px;height:14px;"></div>
<span class="t" style="left:276.30px;top:245.00px;font-size:14px;color:#3b7bc4;transform:scaleX(0.9950);transform-origin:0 0;">1170413</span>
<span class="t" style="left:370.60px;top:245.00px;font-size:14px;color:#3b7bc4;transform:scaleX(0.9405);transform-origin:0 0;">Иванов Иван Дмитриевна</span>
<span class="t" style="left:597.80px;top:245.00px;font-size:14px;color:#222;transform:scaleX(0.9404);transform-origin:0 0;">01.10.2015</span>
<span class="t" style="left:677.80px;top:245.00px;font-size:14px;color:#222;transform:scaleX(0.9404);transform-origin:0 0;">06.10.2015</span>
<div class="dot" style="left:757px;top:250px;width:6px;height:11px;background:#ffb911"></div>
<span class="t" style="left:765.00px;top:245.00px;font-size:14px;color:#222;transform:scaleX(0.9025);transform-origin:0 0;">DBL</span>
<div style="left:1054px;top:241px;width:85px;height:28px;background:#ffe99b"></div>
<span class="t" style="left:1080.28px;top:245.00px;font-size:14px;color:#b4790a;transform:scaleX(0.9469);transform-origin:100% 0;">225,00 ₽</span>
<div class="dot" style="left:1142px;top:250px;width:5.5px;height:11px;background:#8dc63f"></div>
<span class="t" style="left:1149.60px;top:245.00px;font-size:14px;color:#111;transform:scaleX(0.8313);transform-origin:0 0;">RACK</span>
<div class="st" style="left:1226.5px;top:245px;width:30px;height:20px;"></div>
<span class="t" style="left:1233.60px;top:245.00px;font-size:14px;color:#5d6d63;transform:scaleX(0.9177);transform-origin:0 0;">П</span>
<div class="cb" style="left:248px;top:276px;width:14px;height:14px;"></div>
<span class="t" style="left:276.30px;top:273.00px;font-size:14px;color:#3b7bc4;transform:scaleX(0.9950);transform-origin:0 0;">1170414</span>
<span class="t" style="left:370.60px;top:273.00px;font-size:14px;color:#3b7bc4;transform:scaleX(0.9494);transform-origin:0 0;">Петренко Иван</span>
<span class="t" style="left:597.80px;top:273.00px;font-size:14px;color:#222;transform:scaleX(0.9404);transform-origin:0 0;">01.10.2015</span>
<span class="t" style="left:677.80px;top:273.00px;font-size:14px;color:#222;transform:scaleX(0.9404);transform-origin:0 0;">06.10.2015</span>
<div class="dot" style="left:757px;top:278px;width:6px;height:11px;background:#8fb3d9"></div>
<span class="t" style="left:765.00px;top:273.00px;font-size:14px;color:#222;transform:scaleX(0.9030);transform-origin:0 0;">TWN</span>
<div style="left:1054px;top:269px;width:85px;height:28px;background:#ffe99b"></div>
<span class="t" style="left:1080.28px;top:273.00px;font-size:14px;color:#b4790a;transform:scaleX(0.9469);transform-origin:100% 0;">215,00 ₽</span>
<div class="dot" style="left:1142px;top:278px;width:5.5px;height:11px;background:#8dc63f"></div>
<span class="t" style="left:1149.60px;top:273.00px;font-size:14px;color:#111;transform:scaleX(0.8313);transform-origin:0 0;">RACK</span>
<div class="st" style="left:1226.5px;top:273px;width:30px;height:20px;"></div>
<span class="t" style="left:1233.60px;top:273.00px;font-size:14px;color:#5d6d63;transform:scaleX(0.9177);transform-origin:0 0;">П</span>
<div style="left:239px;top:297px;width:1004px;height:28px;background:#f3f3f3"></div>
<div class="cb" style="left:248px;top:304px;width:14px;height:14px;"></div>
<span class="t" style="left:276.30px;top:301.00px;font-size:14px;color:#3b7bc4;transform:scaleX(0.9950);transform-origin:0 0;">1170412</span>
<span class="t" style="left:370.60px;top:301.00px;font-size:14px;color:#3b7bc4;transform:scaleX(0.9424);transform-origin:0 0;">Иванов Петр</span>
<span class="t" style="left:597.80px;top:301.00px;font-size:14px;color:#222;transform:scaleX(0.9404);transform-origin:0 0;">02.10.2015</span>
<span class="t" style="left:677.80px;top:301.00px;font-size:14px;color:#222;transform:scaleX(0.9404);transform-origin:0 0;">05.10.2015</span>
<div class="dot" style="left:757px;top:306px;width:6px;height:11px;background:#ffb911"></div>
<span class="t" style="left:765.00px;top:301.00px;font-size:14px;color:#222;transform:scaleX(0.9025);transform-origin:0 0;">DBL</span>
<span class="t" style="left:1080.28px;top:301.00px;font-size:14px;color:#333;transform:scaleX(0.9469);transform-origin:100% 0;">175,00 ₽</span>
<div class="dot" style="left:1142px;top:306px;width:5.5px;height:11px;background:#8dc63f"></div>
<span class="t" style="left:1149.60px;top:301.00px;font-size:14px;color:#111;transform:scaleX(0.8313);transform-origin:0 0;">RACK</span>
<div class="st" style="left:1226.5px;top:301px;width:30px;height:20px;"></div>
<span class="t" style="left:1233.60px;top:301.00px;font-size:14px;color:#5d6d63;transform:scaleX(0.9177);transform-origin:0 0;">П</span>
<div class="cb" style="left:248px;top:332px;width:14px;height:14px;"></div>
<span class="t" style="left:276.30px;top:329.00px;font-size:14px;color:#3b7bc4;transform:scaleX(0.9950);transform-origin:0 0;">1180420</span>
<span class="t" style="left:370.60px;top:329.00px;font-size:14px;color:#3b7bc4;transform:scaleX(0.9383);transform-origin:0 0;">Петров Петр</span>
<span class="t" style="left:597.80px;top:329.00px;font-size:14px;color:#222;transform:scaleX(0.9404);transform-origin:0 0;">03.10.2015</span>
<span class="t" style="left:677.80px;top:329.00px;font-size:14px;color:#222;transform:scaleX(0.9404);transform-origin:0 0;">05.10.2015</span>
<div class="dot" style="left:757px;top:334px;width:6px;height:11px;background:#8dc63f"></div>
<span class="t" style="left:765.00px;top:329.00px;font-size:14px;color:#222;transform:scaleX(0.8299);transform-origin:0 0;">SGL</span>
<div style="left:1054px;top:325px;width:85px;height:28px;background:#ffe99b"></div>
<span class="t" style="left:1080.28px;top:329.00px;font-size:14px;color:#b4790a;transform:scaleX(0.9469);transform-origin:100% 0;">700,10 ₽</span>
<div class="dot" style="left:1142px;top:334px;width:5.5px;height:11px;background:#8dc63f"></div>
<span class="t" style="left:1149.60px;top:329.00px;font-size:14px;color:#111;transform:scaleX(0.8313);transform-origin:0 0;">RACK</span>
<div class="st" style="left:1226.5px;top:329px;width:30px;height:20px;"></div>
<span class="t" style="left:1233.60px;top:329.00px;font-size:14px;color:#5d6d63;transform:scaleX(0.9177);transform-origin:0 0;">П</span>
<div style="left:239px;top:353px;width:1004px;height:28px;background:#f3f3f3"></div>
<div class="cb" style="left:248px;top:360px;width:14px;height:14px;"></div>
<span class="t" style="left:276.30px;top:357.00px;font-size:14px;color:#3b7bc4;transform:scaleX(0.9950);transform-origin:0 0;">1180422</span>
<span class="t" style="left:370.60px;top:357.00px;font-size:14px;color:#3b7bc4;transform:scaleX(0.9379);transform-origin:0 0;">Петренко Сергей Львович</span>
<span class="t" style="left:597.80px;top:357.00px;font-size:14px;color:#222;transform:scaleX(0.9404);transform-origin:0 0;">05.10.2015</span>
<span class="t" style="left:677.80px;top:357.00px;font-size:14px;color:#222;transform:scaleX(0.9404);transform-origin:0 0;">06.10.2015</span>
<div class="dot" style="left:757px;top:362px;width:6px;height:11px;background:#8fb3d9"></div>
<span class="t" style="left:765.00px;top:357.00px;font-size:14px;color:#222;transform:scaleX(0.9030);transform-origin:0 0;">TWN</span>
<span class="t" style="left:1095.85px;top:357.00px;font-size:14px;color:#333;transform:scaleX(0.9345);transform-origin:100% 0;">0,00 ₽</span>
<div class="dot" style="left:1142px;top:362px;width:5.5px;height:11px;background:#f8cdb0"></div>
<span class="t" style="left:1149.60px;top:357.00px;font-size:14px;color:#111;transform:scaleX(0.8768);transform-origin:0 0;">DISC-5</span>
<div class="st" style="left:1226.5px;top:357px;width:30px;height:20px;"></div>
<span class="t" style="left:1233.60px;top:357.00px;font-size:14px;color:#5d6d63;transform:scaleX(0.9177);transform-origin:0 0;">П</span>
<div style="left:454px;top:303.5px;width:33px;height:15.5px;background:#b9dde9;border-radius:2px"></div>
<span class="t" style="left:456.80px;top:301.20px;font-size:12px;color:#000;transform:scaleX(0.8990);transform-origin:0 0;">HIGH</span>
<div style="left:491.3px;top:303.5px;width:30px;height:15.5px;background:#ffff2e;border-radius:2px"></div>
<span class="t" style="left:494.00px;top:301.20px;font-size:12px;color:#000;transform:scaleX(0.9057);transform-origin:0 0;">VIP3</span>
<div style="left:366px;top:188px;width:3px;height:193px;border-left:1px solid #b4b4b4;border-right:1px solid #b4b4b4;background:#fff"></div>
<div style="left:1243px;top:213px;width:17px;height:416px;background:#fff"></div>
<svg class="i" style="left:1248px;top:217px" width="6" height="3" viewBox="0 0 6 3"><path d="M3 0L6 3H0z" fill="#e4e4e4"/></svg>
</section>
</main>
<section class="ctx">
<div class="menu" style="left:780px;top:199px;width:301px;height:287px;"></div>
<div class="sep" style="left:814px;top:270px;width:263px;height:1px;"></div>
<div class="sep" style="left:814px;top:318px;width:263px;height:1px;"></div>
<div class="sep" style="left:814px;top:389px;width:263px;height:1px;"></div>
<div class="sep" style="left:814px;top:437px;width:263px;height:1px;"></div>
<div class="hl" style="left:782px;top:439px;width:296px;height:22px;"></div>
<svg class="i" style="left:790px;top:204px" width="16" height="17" viewBox="0 0 16 17"><text x="0.2" y="6.9" style="font-family:'Liberation Sans',sans-serif;font-weight:700;font-size:9.8px" fill="#1d4f9e" textLength="6.3" lengthAdjust="spacingAndGlyphs">A</text><text x="0.2" y="15.7" style="font-family:'Liberation Sans',sans-serif;font-weight:700;font-size:9.8px" fill="#a3210f" textLength="6.3" lengthAdjust="spacingAndGlyphs">Z</text><path d="M11.500 0v12" stroke="#222" stroke-width="1.200" fill="none"/><path d="M8.700 11.200h5.600l-2.800 5z" fill="#222"/></svg>
<span class="t" style="left:819.30px;top:202.20px;font-size:14px;color:#333;transform:scaleX(0.9393);transform-origin:0 0;">Сортировка по возрастанию</span>
<svg class="i" style="left:790px;top:227px" width="16" height="17" viewBox="0 0 16 17"><text x="0.2" y="6.9" style="font-family:'Liberation Sans',sans-serif;font-weight:700;font-size:9.8px" fill="#a3210f" textLength="6.3" lengthAdjust="spacingAndGlyphs">Z</text><text x="0.2" y="15.7" style="font-family:'Liberation Sans',sans-serif;font-weight:700;font-size:9.8px" fill="#1d4f9e" textLength="6.3" lengthAdjust="spacingAndGlyphs">A</text><path d="M11.500 0v12" stroke="#222" stroke-width="1.200" fill="none"/><path d="M8.700 11.200h5.600l-2.800 5z" fill="#222"/></svg>
<span class="t" style="left:819.30px;top:225.20px;font-size:14px;color:#333;transform:scaleX(0.9391);transform-origin:0 0;">Сортировка по убыванию</span>
<svg class="i" style="left:790px;top:250px" width="16" height="17" viewBox="0 0 16 17"><text x="0.2" y="6.9" style="font-family:'Liberation Sans',sans-serif;font-weight:700;font-size:9.8px" fill="#a9c3e6" textLength="6.3" lengthAdjust="spacingAndGlyphs">A</text><text x="0.2" y="15.7" style="font-family:'Liberation Sans',sans-serif;font-weight:700;font-size:9.8px" fill="#e3aaa2" textLength="6.3" lengthAdjust="spacingAndGlyphs">Z</text><path d="M8 2l7 7M15 2l-7 7" stroke="#e8a79c" stroke-width="1" fill="none"/><path d="M11.500 0v2.500M11.500 9v4" stroke="#b9b9b9" stroke-width="1.100" fill="none"/><path d="M8.800 12h5.400l-2.700 4.300z" fill="#b9b9b9"/></svg>
<span class="t" style="left:819.30px;top:248.20px;font-size:14px;color:#d4d4d4;transform:scaleX(0.9293);transform-origin:0 0;">Очистить сортировку</span>
<svg class="i" style="left:789px;top:277px" width="17" height="13" viewBox="0 0 17 13"><rect x="0.600" y="0.700" width="11.300" height="4" rx="2" fill="#b9d6f6" stroke="#2a5cad" stroke-width="1.200"/><rect x="4.700" y="6.900" width="11.300" height="4" rx="2" fill="#b9d6f6" stroke="#2a5cad" stroke-width="1.200"/></svg>
<span class="t" style="left:819.30px;top:273.20px;font-size:14px;color:#333;transform:scaleX(0.9449);transform-origin:0 0;">Сгруппировать по этой колонке</span>
<svg class="i" style="left:789px;top:298px" width="16" height="16" viewBox="0 0 16 16"><g shape-rendering="crispEdges"><rect x="0.500" y="0.500" width="15" height="14" fill="#fff" stroke="#6f7fb0"/><rect x="1" y="1" width="14" height="5" fill="#e3e6ef"/><rect x="2" y="2" width="5" height="3" fill="#3c6fc0"/><rect x="8" y="2" width="6" height="3" fill="#d6d6d6"/><rect x="1" y="6" width="14" height="2" fill="#4470bb"/><path d="M1 10.500h14M1 12.500h14M5.500 6v8M10.500 6v8" stroke="#b4bcd2" stroke-width="1" fill="none"/></g></svg>
<span class="t" style="left:819.30px;top:296.20px;font-size:14px;color:#333;transform:scaleX(0.9464);transform-origin:0 0;">Показать панель группировки</span>
<svg class="i" style="left:789px;top:323px" width="16" height="16" viewBox="0 0 16 16"><g shape-rendering="crispEdges"><rect x="0.500" y="0.500" width="12" height="10" fill="#fff" stroke="#a3abc4"/><rect x="0" y="0" width="13" height="3" fill="#3461ad"/><path d="M4.500 0v10M8.500 0v10M0.500 5.500h12M0.500 8.500h12" stroke="#c0c6d8" stroke-width="1" fill="none"/><path d="M4.500 0v3M8.500 0v3" stroke="#fff" stroke-width="1"/><rect x="4.500" y="4.500" width="11" height="11" fill="#fff" stroke="#111" stroke-width="1"/><rect x="5" y="5" width="10" height="10" fill="none" stroke="#111" stroke-width="1"/><path d="M7 8h6M7 10.500h6M7 13h6" stroke="#2f64b6" stroke-width="1.400" fill="none"/></g></svg>
<span class="t" style="left:819.30px;top:321.20px;font-size:14px;color:#333;transform:scaleX(0.9481);transform-origin:0 0;">Показать выбор колонок</span>
<svg class="i" style="left:789px;top:347px" width="16" height="16" viewBox="0 0 16 16"><rect x="0.600" y="0.600" width="14.800" height="4" rx="1" fill="#b9d6f6" stroke="#2a5cad" stroke-width="1.200"/><path d="M0.600 6v8.400M15.400 6v8.400M1.500 10.200h13" stroke="#111" stroke-width="1.100" fill="none"/><path d="M1 10.200l3.600-2.600v5.200zM15 10.200l-3.600-2.600v5.200z" fill="#111"/></svg>
<span class="t" style="left:819.30px;top:344.20px;font-size:14px;color:#333;transform:scaleX(0.9287);transform-origin:0 0;">Наиболее соответствующий</span>
<span class="t" style="left:819.30px;top:367.20px;font-size:14px;color:#333;transform:scaleX(0.9343);transform-origin:0 0;">Наиболее соответствующий (все колонки)</span>
<svg class="i" style="left:789.5px;top:394px" width="16" height="16" viewBox="0 0 16 16"><ellipse cx="7.200" cy="2.900" rx="6.200" ry="2.200" fill="#fff" stroke="#111" stroke-width="1.400"/><path d="M0.800 3.400L6.200 8.800V14.800H8.200V8.800L13.600 3.400Q7.200 6.800 0.800 3.400z" fill="#111"/></svg>
<span class="t" style="left:819.30px;top:392.20px;font-size:14px;color:#333;transform:scaleX(0.9222);transform-origin:0 0;">Редактор фильтров...</span>
<svg class="i" style="left:789px;top:417px" width="17" height="17" viewBox="0 0 17 17"><path d="M10 10l5 5" stroke="#7e8796" stroke-width="3.200" stroke-linecap="round"/><path d="M10.500 10.500l4.300 4.300" stroke="#c9d3e2" stroke-width="1.300" stroke-linecap="round"/><circle cx="6.300" cy="6.300" r="5.300" fill="#dbeaf7" stroke="#868d99" stroke-width="1.700"/><circle cx="6.300" cy="6.300" r="3.500" fill="#a9d7f7" stroke="#e9f3fb" stroke-width="0.900"/></svg>
<span class="t" style="left:819.30px;top:415.20px;font-size:14px;color:#333;transform:scaleX(0.9327);transform-origin:0 0;">Показать панель поиска</span>
<svg class="i" style="left:789px;top:443px" width="16" height="13" viewBox="0 0 16 13"><g shape-rendering="crispEdges"><rect x="0" y="0" width="16" height="13" fill="#7f9bd1"/><rect x="1" y="1" width="4" height="3" fill="#fff"/><rect x="6" y="1" width="4" height="3" fill="#fff"/><rect x="11" y="1" width="4" height="3" fill="#fff"/><rect x="1" y="5" width="4" height="3" fill="#fff"/><rect x="6" y="5" width="4" height="3" fill="#fff"/><rect x="11" y="5" width="4" height="3" fill="#fff"/><rect x="1" y="9" width="4" height="3" fill="#fff"/><rect x="6" y="9" width="4" height="3" fill="#fff"/><rect x="11" y="9" width="4" height="3" fill="#fff"/><rect x="5" y="0" width="6" height="5" fill="#c98a2b"/><rect x="6" y="1" width="4" height="3" fill="#f4c56a"/><rect x="0" y="4" width="6" height="5" fill="#c23b3b"/><rect x="1" y="5" width="4" height="3" fill="#ee6b6b"/><rect x="10" y="8" width="6" height="5" fill="#4f9a28"/><rect x="11" y="9" width="4" height="3" fill="#8fce55"/></g></svg>
<span class="t" style="left:819.30px;top:440.20px;font-size:14px;color:#fff;transform:scaleX(0.9841);transform-origin:0 0;">Conditional Formatting</span>
<span class="t" style="left:819.30px;top:463.20px;font-size:14px;color:#333;transform:scaleX(0.9255);transform-origin:0 0;">Экспорт в Excel...</span>
</section>
<section class="ctx">
<div class="menu" style="left:926px;top:464px;width:155px;height:142px;"></div>
<svg class="i" style="left:935px;top:470px" width="16" height="13" viewBox="0 0 16 13"><g shape-rendering="crispEdges"><rect x="0" y="0" width="16" height="13" fill="#7f93cf"/><rect x="1" y="1" width="14" height="11" fill="#e9eefa"/><rect x="0" y="0" width="6" height="13" fill="#4f9a28"/><rect x="1" y="1" width="4" height="11" fill="#86c94c"/></g><path d="M3 11V2.500" stroke="#111" stroke-width="1"/><path d="M1.300 5L3 2l1.700 3" stroke="#111" stroke-width="1" fill="none"/><text x="6.600" y="9.900" style="font-family:'Liberation Sans',sans-serif;font-weight:700;font-size:9px" fill="#17357f" textLength="8.200" lengthAdjust="spacingAndGlyphs">10</text></svg>
<span class="t" style="left:965.20px;top:467.20px;font-size:14px;color:#333;transform:scaleX(0.9544);transform-origin:0 0;">Top 10 Items...</span>
<svg class="i" style="left:935px;top:493px" width="16" height="13" viewBox="0 0 16 13"><g shape-rendering="crispEdges"><rect x="0" y="0" width="16" height="13" fill="#7f93cf"/><rect x="1" y="1" width="14" height="11" fill="#e9eefa"/><rect x="0" y="0" width="6" height="13" fill="#4f9a28"/><rect x="1" y="1" width="4" height="11" fill="#86c94c"/></g><path d="M3 11V2.500" stroke="#111" stroke-width="1"/><path d="M1.300 5L3 2l1.700 3" stroke="#111" stroke-width="1" fill="none"/><text x="6.800" y="10" style="font-family:'Liberation Sans',sans-serif;font-weight:700;font-size:9px;font-size:10px;font-weight:400" fill="#17357f" textLength="8" lengthAdjust="spacingAndGlyphs">%</text></svg>
<span class="t" style="left:965.20px;top:490.20px;font-size:14px;color:#333;transform:scaleX(0.9340);transform-origin:0 0;">Top 10 %...</span>
<svg class="i" style="left:935px;top:516px" width="16" height="13" viewBox="0 0 16 13"><g shape-rendering="crispEdges"><rect x="0" y="0" width="16" height="13" fill="#7f93cf"/><rect x="1" y="1" width="14" height="11" fill="#e9eefa"/><rect x="0" y="0" width="6" height="13" fill="#5b93d3"/><rect x="1" y="1" width="4" height="11" fill="#9fcbf1"/></g><path d="M3 2v8.500" stroke="#1c3f8f" stroke-width="1"/><path d="M1.300 8L3 11l1.700-3" stroke="#1c3f8f" stroke-width="1" fill="none"/><text x="6.600" y="9.900" style="font-family:'Liberation Sans',sans-serif;font-weight:700;font-size:9px" fill="#17357f" textLength="8.200" lengthAdjust="spacingAndGlyphs">10</text></svg>
<span class="t" style="left:965.20px;top:513.20px;font-size:14px;color:#333;transform:scaleX(0.9725);transform-origin:0 0;">Bottom 10 Items...</span>
<svg class="i" style="left:935px;top:539px" width="16" height="13" viewBox="0 0 16 13"><g shape-rendering="crispEdges"><rect x="0" y="0" width="16" height="13" fill="#7f93cf"/><rect x="1" y="1" width="14" height="11" fill="#e9eefa"/><rect x="0" y="0" width="6" height="13" fill="#5b93d3"/><rect x="1" y="1" width="4" height="11" fill="#9fcbf1"/></g><path d="M3 2v8.500" stroke="#1c3f8f" stroke-width="1"/><path d="M1.300 8L3 11l1.700-3" stroke="#1c3f8f" stroke-width="1" fill="none"/><text x="6.800" y="10" style="font-family:'Liberation Sans',sans-serif;font-weight:700;font-size:9px;font-size:10px;font-weight:400" fill="#17357f" textLength="8" lengthAdjust="spacingAndGlyphs">%</text></svg>
<span class="t" style="left:965.20px;top:536.20px;font-size:14px;color:#333;transform:scaleX(0.9612);transform-origin:0 0;">Bottom 10 %...</span>
<svg class="i" style="left:935px;top:562px" width="16" height="13" viewBox="0 0 16 13"><g shape-rendering="crispEdges"><rect x="0" y="0" width="16" height="13" fill="#7f93cf"/><rect x="1" y="1" width="14" height="11" fill="#e9eefa"/><rect x="0" y="0" width="6" height="13" fill="#4f9a28"/><rect x="1" y="1" width="4" height="11" fill="#86c94c"/></g><path d="M3 11V2.500" stroke="#111" stroke-width="1"/><path d="M1.300 5L3 2l1.700 3" stroke="#111" stroke-width="1" fill="none"/><path d="M8.500 3.500h5" stroke="#17357f" stroke-width="1"/><text x="8.300" y="10.800" style="font-family:'Liberation Sans',sans-serif;font-weight:700;font-size:9px;font-size:8.500px" fill="#17357f" textLength="5.500" lengthAdjust="spacingAndGlyphs">x</text></svg>
<span class="t" style="left:965.20px;top:559.20px;font-size:14px;color:#333;transform:scaleX(0.9273);transform-origin:0 0;">Above Average...</span>
<svg class="i" style="left:935px;top:585px" width="16" height="13" viewBox="0 0 16 13"><g shape-rendering="crispEdges"><rect x="0" y="0" width="16" height="13" fill="#7f93cf"/><rect x="1" y="1" width="14" height="11" fill="#e9eefa"/><rect x="0" y="0" width="6" height="13" fill="#5b93d3"/><rect x="1" y="1" width="4" height="11" fill="#9fcbf1"/></g><path d="M3 2v8.500" stroke="#1c3f8f" stroke-width="1"/><path d="M1.300 8L3 11l1.700-3" stroke="#1c3f8f" stroke-width="1" fill="none"/><path d="M8.500 3.500h5" stroke="#17357f" stroke-width="1"/><text x="8.300" y="10.800" style="font-family:'Liberation Sans',sans-serif;font-weight:700;font-size:9px;font-size:8.500px" fill="#17357f" textLength="5.500" lengthAdjust="spacingAndGlyphs">x</text></svg>
<span class="t" style="left:965.20px;top:582.20px;font-size:14px;color:#333;transform:scaleX(0.9401);transform-origin:0 0;">Below Average...</span>
</section>
<section class="ctx">
<div class="menu" style="left:1080px;top:439px;width:180px;height:169px;"></div>
<div class="hl" style="left:1081px;top:464px;width:176px;height:22px;"></div>
<div class="sep" style="left:1113px;top:487px;width:143px;height:1px;"></div>
<div class="sep" style="left:1113px;top:558px;width:143px;height:1px;"></div>
<svg class="i" style="left:1088px;top:445px" width="16" height="13" viewBox="0 0 16 13"><g shape-rendering="crispEdges"><rect x="0" y="0" width="16" height="13" fill="#8ea4d6"/><rect x="1" y="1" width="4" height="3" fill="#fff"/><rect x="6" y="1" width="4" height="3" fill="#fff"/><rect x="11" y="1" width="4" height="3" fill="#fff"/><rect x="1" y="5" width="4" height="3" fill="#fff"/><rect x="6" y="5" width="4" height="3" fill="#fff"/><rect x="11" y="5" width="4" height="3" fill="#fff"/><rect x="1" y="9" width="4" height="3" fill="#fff"/><rect x="6" y="9" width="4" height="3" fill="#fff"/><rect x="11" y="9" width="4" height="3" fill="#fff"/><rect x="5" y="0" width="6" height="5" fill="#c98a2b"/><rect x="6" y="1" width="4" height="3" fill="#f4c56a"/><rect x="0" y="4" width="6" height="5" fill="#c98a2b"/><rect x="1" y="5" width="4" height="3" fill="#f4c56a"/><rect x="10" y="8" width="6" height="5" fill="#c98a2b"/><rect x="11" y="9" width="4" height="3" fill="#f4c56a"/></g></svg>
<span class="t" style="left:1118.40px;top:442.20px;font-size:14px;color:#333;transform:scaleX(0.9684);transform-origin:0 0;">Highlight Cells Rules</span>
<svg class="i" style="left:1249.5px;top:449px" width="4" height="6" viewBox="0 0 4 6"><path d="M0 0L3.500 3L0 6z" fill="#333"/></svg>
<svg class="i" style="left:1088px;top:468px" width="16" height="13" viewBox="0 0 16 13"><g shape-rendering="crispEdges"><rect x="0" y="0" width="16" height="13" fill="#8ea4d6"/><rect x="6" y="1" width="4" height="3" fill="#fff"/><rect x="6" y="5" width="4" height="3" fill="#fff"/><rect x="6" y="9" width="4" height="3" fill="#fff"/><rect x="0" y="0" width="6" height="13" fill="#4f9a28"/><rect x="1" y="1" width="4" height="11" fill="#86c94c"/><rect x="10" y="0" width="6" height="13" fill="#4a86c8"/><rect x="11" y="1" width="4" height="11" fill="#8cc0ee"/></g><path d="M3 11V2.500M13 2v8.500" stroke="#15251a" stroke-width="1"/><path d="M1.300 5L3 2l1.700 3M11.300 8L13 11l1.700-3" stroke="#15251a" stroke-width="1" fill="none"/></svg>
<span class="t" style="left:1118.40px;top:465.20px;font-size:14px;color:#fff;transform:scaleX(0.9637);transform-origin:0 0;">Top/Bottom Rules</span>
<svg class="i" style="left:1249.5px;top:472px" width="4" height="6" viewBox="0 0 4 6"><path d="M0 0L3.500 3L0 6z" fill="#fff"/></svg>
<svg class="i" style="left:1088px;top:492px" width="16" height="16" viewBox="0 0 16 16"><rect x="0.500" y="0.500" width="15" height="15" rx="1.200" fill="#fff" stroke="#6f8fd0"/><path d="M0.500 5.500h15M0.500 10.500h15" stroke="#6f8fd0" stroke-width="1"/><rect x="2" y="2" width="6" height="2" fill="#3d7fd0"/><rect x="2" y="7" width="9" height="2" fill="#3d7fd0"/><rect x="2" y="12" width="12" height="2" fill="#3d7fd0"/></svg>
<span class="t" style="left:1118.40px;top:490.20px;font-size:14px;color:#333;transform:scaleX(0.9207);transform-origin:0 0;">Data Bars</span>
<svg class="i" style="left:1249.5px;top:497px" width="4" height="6" viewBox="0 0 4 6"><path d="M0 0L3.500 3L0 6z" fill="#333"/></svg>
<svg class="i" style="left:1088px;top:515px" width="16" height="16" viewBox="0 0 16 16"><rect x="0.500" y="0.500" width="15" height="15" rx="1" fill="#fbe36a" stroke="#c9a33a"/><rect x="0.500" y="0.500" width="15" height="5" fill="#6fbe8c" stroke="#3f9b63"/><rect x="0.500" y="10.500" width="15" height="5" fill="#f2565a" stroke="#c9383c"/></svg>
<span class="t" style="left:1118.40px;top:513.20px;font-size:14px;color:#333;transform:scaleX(0.9183);transform-origin:0 0;">Color Scales</span>
<svg class="i" style="left:1249.5px;top:520px" width="4" height="6" viewBox="0 0 4 6"><path d="M0 0L3.500 3L0 6z" fill="#333"/></svg>
<svg class="i" style="left:1088px;top:538px" width="16" height="16" viewBox="0 0 16 16"><path d="M7.800 0.700L14.800 8H11V14.800H4.600V8H0.800z" fill="#8ecb4a" stroke="#4f8f1e" stroke-width="1" stroke-linejoin="round"/></svg>
<span class="t" style="left:1118.40px;top:536.20px;font-size:14px;color:#333;transform:scaleX(0.9277);transform-origin:0 0;">Icon Sets</span>
<svg class="i" style="left:1249.5px;top:543px" width="4" height="6" viewBox="0 0 4 6"><path d="M0 0L3.500 3L0 6z" fill="#333"/></svg>
<svg class="i" style="left:1088px;top:563px" width="17" height="16" viewBox="0 0 17 16"><g shape-rendering="crispEdges"><rect x="0" y="0" width="13" height="10" fill="#8ea4d6"/><rect x="1" y="1" width="3" height="2" fill="#fff"/><rect x="5" y="1" width="3" height="2" fill="#fff"/><rect x="9" y="1" width="3" height="2" fill="#fff"/><rect x="1" y="4" width="3" height="2" fill="#fff"/><rect x="5" y="4" width="3" height="2" fill="#fff"/><rect x="9" y="4" width="3" height="2" fill="#fff"/><rect x="1" y="7" width="3" height="2" fill="#fff"/><rect x="5" y="7" width="3" height="2" fill="#fff"/><rect x="9" y="7" width="3" height="2" fill="#fff"/><rect x="4" y="0" width="5" height="4" fill="#c98a2b"/><rect x="5" y="1" width="3" height="2" fill="#f4c56a"/><rect x="0" y="3" width="5" height="4" fill="#c23b3b"/><rect x="1" y="4" width="3" height="2" fill="#ee6b6b"/></g><g transform="rotate(-38 10.500 10.500)"><rect x="5" y="8" width="10.500" height="5.200" rx="1.500" fill="#ee6f73" stroke="#c5444a" stroke-width="0.800"/><rect x="5" y="8" width="4" height="5.200" rx="1.500" fill="#4f8fd8" stroke="#2f6cb8" stroke-width="0.800"/></g></svg>
<span class="t" style="left:1118.40px;top:561.20px;font-size:14px;color:#333;transform:scaleX(0.9225);transform-origin:0 0;">Clear Rules</span>
<svg class="i" style="left:1249.5px;top:568px" width="4" height="6" viewBox="0 0 4 6"><path d="M0 0L3.500 3L0 6z" fill="#333"/></svg>
<svg class="i" style="left:1088px;top:586px" width="17" height="16" viewBox="0 0 17 16"><g shape-rendering="crispEdges"><rect x="0" y="0" width="13" height="10" fill="#8ea4d6"/><rect x="1" y="1" width="3" height="2" fill="#fff"/><rect x="5" y="1" width="3" height="2" fill="#fff"/><rect x="9" y="1" width="3" height="2" fill="#fff"/><rect x="1" y="4" width="3" height="2" fill="#fff"/><rect x="5" y="4" width="3" height="2" fill="#fff"/><rect x="9" y="4" width="3" height="2" fill="#fff"/><rect x="1" y="7" width="3" height="2" fill="#fff"/><rect x="5" y="7" width="3" height="2" fill="#fff"/><rect x="9" y="7" width="3" height="2" fill="#fff"/><rect x="4" y="0" width="5" height="4" fill="#c98a2b"/><rect x="5" y="1" width="3" height="2" fill="#f4c56a"/><rect x="0" y="3" width="5" height="4" fill="#c23b3b"/><rect x="1" y="4" width="3" height="2" fill="#ee6b6b"/></g><circle cx="11.500" cy="10.800" r="3.700" fill="#dfe6f3" stroke="#45598a" stroke-width="1.600" stroke-dasharray="1.940 0.960"/><circle cx="11.500" cy="10.800" r="2.700" fill="#e6ecf6" stroke="#45598a" stroke-width="1"/><circle cx="11.500" cy="10.800" r="1" fill="#fff" stroke="#45598a" stroke-width="0.700"/></svg>
<span class="t" style="left:1118.40px;top:584.20px;font-size:14px;color:#333;transform:scaleX(0.9285);transform-origin:0 0;">Manage Rules</span>
</section>
<svg class="a" style="left:0;top:0;pointer-events:none" width="1274" height="629" viewBox="0 0 1274 629"><path d="M921.8 372.1 L1062.5 443 L1067.5 432.7 L1113.4 472.6 L1054.2 458.7 L1058.4 448.6 L919.5 376.3 Z" fill="#fe0000"/></svg>
</body></html>
